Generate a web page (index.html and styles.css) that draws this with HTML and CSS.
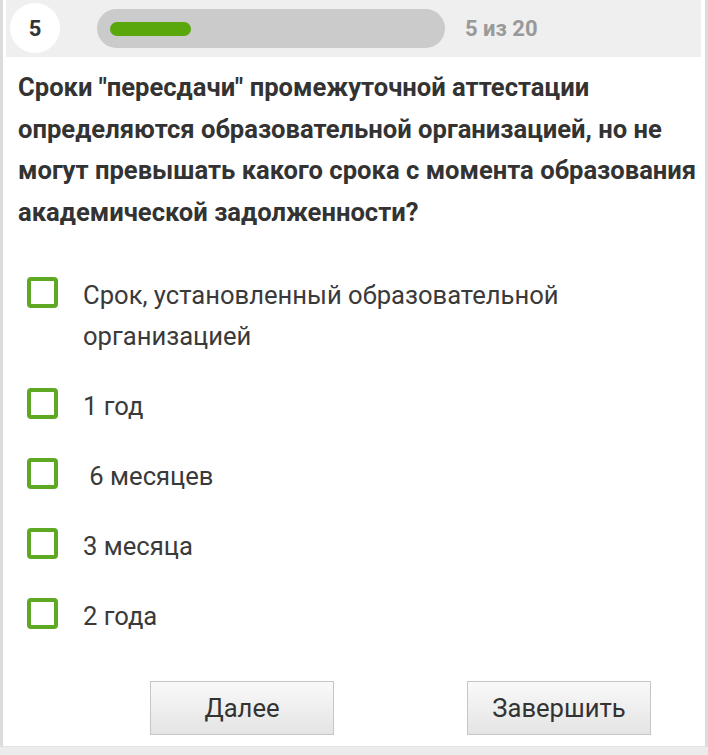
FILE: index.html
```html
<!DOCTYPE html>
<html lang="ru">
<head>
  <meta charset="UTF-8">
  <title>Тест</title>
  <link rel="stylesheet" href="styles.css">
</head>
<body>
  <div class="page">
    <div class="header">
      <div class="num">5</div>
      <div class="track"><div class="fill"></div></div>
      <div class="count">5 из 20</div>
    </div>

    <div class="question">Сроки "пересдачи" промежуточной аттестации определяются образовательной организацией, но не могут превышать какого срока с момента образования академической задолженности?</div>

    <div class="options">
      <div class="option"><span class="box"></span><span class="label">Срок, установленный образовательной организацией</span></div>
      <div class="option"><span class="box"></span><span class="label">1 год</span></div>
      <div class="option"><span class="box"></span><span class="label">&nbsp;6 месяцев</span></div>
      <div class="option"><span class="box"></span><span class="label">3 месяца</span></div>
      <div class="option"><span class="box"></span><span class="label">2 года</span></div>
    </div>

    <div class="buttons">
      <div class="btn">Далее</div>
      <div class="btn">Завершить</div>
    </div>
  </div>
  <div class="bottom"></div>
</body>
</html>
```

FILE: styles.css
```css
html, body {
  margin: 0;
  padding: 0;
  width: 708px;
  height: 755px;
  overflow: hidden;
  background: white;
  font-family: Roboto, "Liberation Sans", sans-serif;
  color: #333;
}
.page {
  height: 746px;
  border-left: 3px solid #dcdcdc;
  border-right: 3px solid #dcdcdc;
  padding: 0 4px 0 3px;
  box-sizing: border-box;
}
.header {
  display: flex;
  align-items: center;
  height: 57px;
  background-color: #efefef;
}
.num {
  width: 50px;
  height: 50px;
  margin-left: 4px;
  border-radius: 50%;
  background: white;
  display: flex;
  align-items: center;
  justify-content: center;
  font-weight: bold;
  font-size: 22px;
  margin-top: -1px;
}
.track {
  width: 348px;
  height: 39px;
  margin-left: 37px;
  border-radius: 20px;
  background-color: #cbcbcb;
  display: flex;
  align-items: center;
  padding-left: 13px;
  box-sizing: border-box;
}
.fill {
  width: 81px;
  height: 14px;
  border-radius: 7px;
  background-color: #5aa70c;
}
.count {
  margin-left: 20px;
  font-size: 22px;
  font-weight: bold;
  color: #999;
}
.question {
  margin: 10px 0 0 12px;
  font-size: 25.6px;
  font-weight: bold;
  line-height: 41.5px;
  color: #333;
}
.options {
  margin-top: 42px;
  display: flex;
  flex-direction: column;
  gap: 29px;
}
.option {
  display: flex;
  align-items: flex-start;
  font-size: 25.6px;
  line-height: 41px;
}
.box {
  flex: none;
  width: 31px;
  height: 31px;
  margin: 1.5px 25px 0 21px;
  border: 4px solid #5ea823;
  border-radius: 4px;
  box-sizing: border-box;
}
.label {
  width: 560px;
  color: #3a3a3a;
}
.buttons {
  display: flex;
  gap: 133px;
  margin: 44px 0 0 144px;
}
.btn {
  width: 184px;
  height: 54px;
  box-sizing: border-box;
  border: 1px solid #c6c6c6;
  background: linear-gradient(#f9f9f9, #e4e4e4);
  display: flex;
  align-items: center;
  justify-content: center;
  font-size: 25.6px;
  color: #333;
}
.bottom {
  height: 9px;
  background-color: #ececec;
  border-top: 1px solid #e2e2e2;
}
```
